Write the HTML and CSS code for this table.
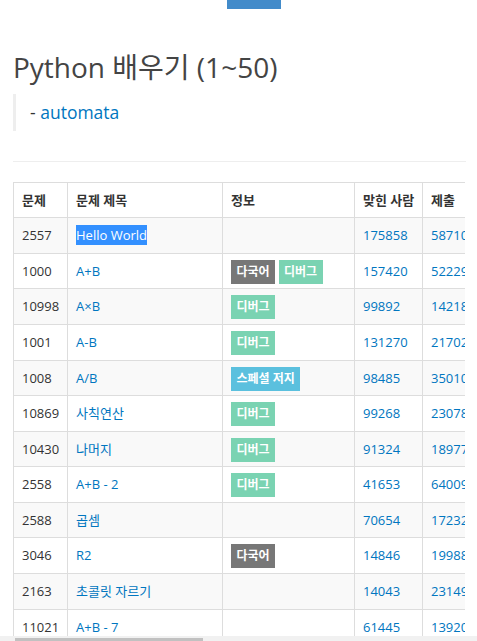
FILE: index.html
```html
<!DOCTYPE html>
<html lang="ko">
<head>
<meta charset="utf-8">
<title>Python 배우기 (1~50)</title>
<link rel="stylesheet" href="styles.css">
</head>
<body>
<div class="topbar"></div>
<main class="container">
  <h1 class="page-title">Python 배우기 (1~50)</h1>
  <blockquote class="quote">- <a href="#">automata</a></blockquote>
  <hr class="divider">
  <div class="table-wrap">
    <table class="problems">
      <colgroup>
        <col class="c-id"><col class="c-title"><col class="c-info"><col class="c-solved"><col class="c-submit"><col class="c-ratio">
      </colgroup>
      <thead>
        <tr><th>문제</th><th>문제 제목</th><th>정보</th><th>맞힌 사람</th><th>제출</th><th>정답 비율</th></tr>
      </thead>
      <tbody>
        <tr><td>2557</td><td><a href="#" class="selected">Hello World</a></td><td></td><td><a href="#">175858</a></td><td><a href="#">587103</a></td><td>31.412%</td></tr>
        <tr><td>1000</td><td><a href="#">A+B</a></td><td><span class="label lang">다국어</span> <span class="label debug">디버그</span></td><td><a href="#">157420</a></td><td><a href="#">522291</a></td><td>40.131%</td></tr>
        <tr><td>10998</td><td><a href="#">A×B</a></td><td><span class="label debug">디버그</span></td><td><a href="#">99892</a></td><td><a href="#">142183</a></td><td>72.302%</td></tr>
        <tr><td>1001</td><td><a href="#">A-B</a></td><td><span class="label debug">디버그</span></td><td><a href="#">131270</a></td><td><a href="#">217024</a></td><td>70.622%</td></tr>
        <tr><td>1008</td><td><a href="#">A/B</a></td><td><span class="label special">스페셜 저지</span></td><td><a href="#">98485</a></td><td><a href="#">350107</a></td><td>32.854%</td></tr>
        <tr><td>10869</td><td><a href="#">사칙연산</a></td><td><span class="label debug">디버그</span></td><td><a href="#">99268</a></td><td><a href="#">230786</a></td><td>48.118%</td></tr>
        <tr><td>10430</td><td><a href="#">나머지</a></td><td><span class="label debug">디버그</span></td><td><a href="#">91324</a></td><td><a href="#">189773</a></td><td>53.760%</td></tr>
        <tr><td>2558</td><td><a href="#">A+B - 2</a></td><td><span class="label debug">디버그</span></td><td><a href="#">41653</a></td><td><a href="#">640095</a></td><td>36.497%</td></tr>
        <tr><td>2588</td><td><a href="#">곱셈</a></td><td></td><td><a href="#">70654</a></td><td><a href="#">172321</a></td><td>47.019%</td></tr>
        <tr><td>3046</td><td><a href="#">R2</a></td><td><span class="label lang">다국어</span></td><td><a href="#">14846</a></td><td><a href="#">199886</a></td><td>80.112%</td></tr>
        <tr><td>2163</td><td><a href="#">초콜릿 자르기</a></td><td></td><td><a href="#">14043</a></td><td><a href="#">231494</a></td><td>62.847%</td></tr>
        <tr><td>11021</td><td><a href="#">A+B - 7</a></td><td></td><td><a href="#">61445</a></td><td><a href="#">139205</a></td><td>45.216%</td></tr>
      </tbody>
    </table>
  </div>
</main>
<div class="hscroll"><div class="hscroll-thumb"></div></div>
</body>
</html>
```
FILE: styles.css
```css
html, body {
  margin: 0;
  height: 100%;
}
body {
  font-family: "Open Sans", "Noto Sans CJK KR", sans-serif;
  font-size: 13px;
  line-height: 1.428571;
  color: #333;
  background: #fff;
  display: flex;
  flex-direction: column;
  overflow: hidden;
}
a {
  color: #0076c0;
  text-decoration: none;
}
.topbar {
  flex: none;
  width: 54px;
  height: 9px;
  margin-left: 227px;
  background: #428bca;
}
.container {
  flex: 1;
  min-height: 0;
  display: flex;
  flex-direction: column;
  padding: 0 11px 0 13px;
}
.page-title {
  margin: 43px 0 0 0;
  font-size: 28px;
  font-weight: 400;
  line-height: 1.1;
  color: #444;
}
.quote {
  margin: 11px 0 0;
  padding: 6px 14px;
  border-left: 3px solid #eee;
  font-size: 17.5px;
  line-height: 25px;
}
.divider {
  width: 100%;
  margin: 30px 0 20px;
  border: 0;
  border-top: 1px solid #eee;
}
.table-wrap {
  flex: 1;
  min-height: 0;
  overflow: hidden;
  margin-right: 1px;
}
.problems {
  table-layout: fixed;
  width: 1060px;
  border-collapse: collapse;
  border-spacing: 0;
}
.c-id { width: 54px; }
.c-title { width: 155px; }
.c-info { width: 132px; }
.c-solved { width: 68px; }
.c-submit { width: 80px; }
.problems th,
.problems td {
  padding: 8px;
  border: 1px solid #ddd;
  text-align: left;
  vertical-align: top;
  white-space: nowrap;
  overflow: hidden;
}
.problems th {
  font-weight: 700;
  color: #333;
}
.problems tbody tr:nth-child(odd) {
  background: #f9f9f9;
}
.selected {
  background: #3390ff;
  color: #fff;
  padding: 1px 0;
}
.label {
  display: inline;
  padding: 3px 5.5px 4px;
  font-size: 12px;
  font-weight: 700;
  color: #fff;
  white-space: nowrap;
}
.label.lang { background: #777; }
.label.debug { background: #7ad3b2; }
.label.special { background: #5bc0de; }
.hscroll {
  position: fixed;
  left: 0;
  right: 0;
  bottom: 0;
  height: 5px;
  background: #f1f1f1;
  display: flex;
  align-items: flex-end;
}
.hscroll-thumb {
  width: 188px;
  height: 3px;
  margin-left: 15px;
  background: #c1c1c1;
}
```
